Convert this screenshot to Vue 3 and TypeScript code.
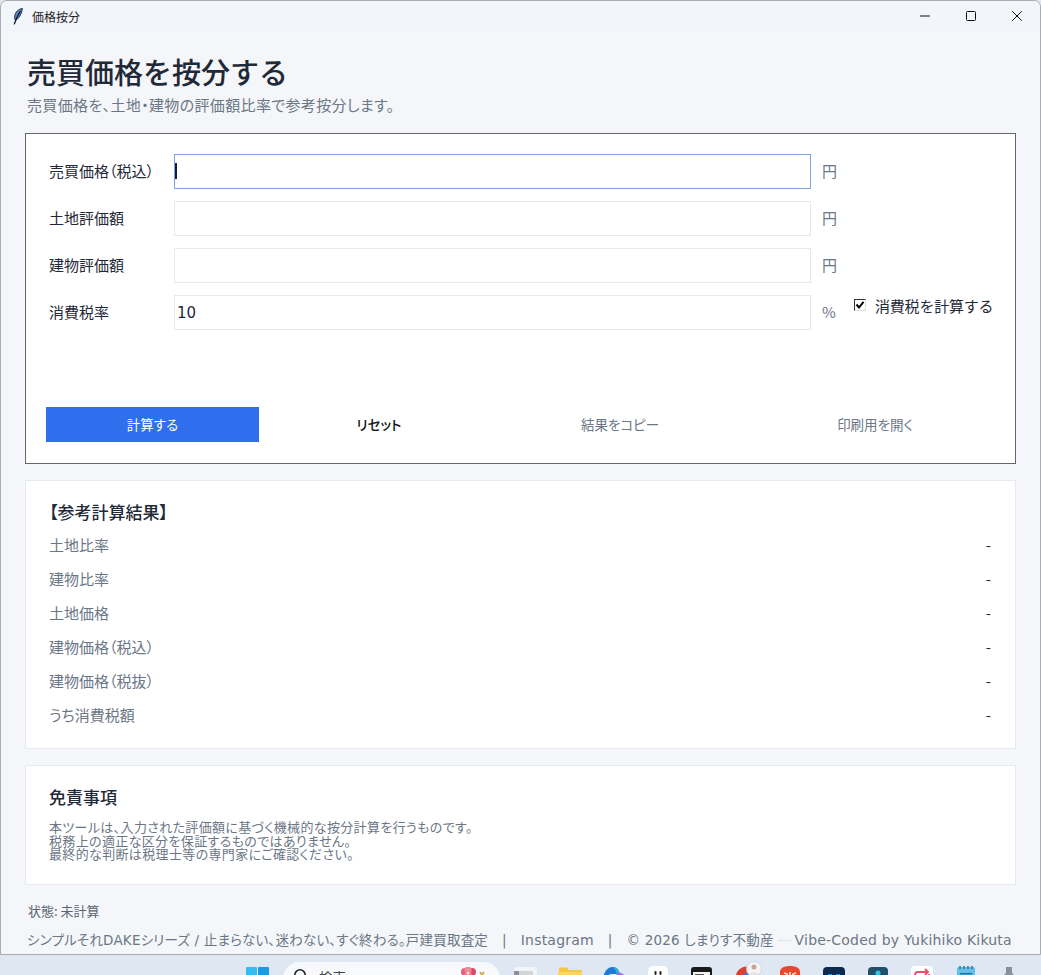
<script setup lang="ts">
import {ref} from 'vue';

interface Field {
  label: string
  unit: string
  value: string
  active?: boolean
}

const fields = ref<Field[]>([
  {label: '売買価格（税込）', unit: '円', value: '', active: true},
  {label: '土地評価額', unit: '円', value: ''},
  {label: '建物評価額', unit: '円', value: ''},
  {label: '消費税率', unit: '%', value: '10'},
]);

const calcTax = ref(true);

const actions = ['計算する', 'リセット', '結果をコピー', '印刷用を開く'];

const results = [
  '土地比率',
  '建物比率',
  '土地価格',
  '建物価格（税込）',
  '建物価格（税抜）',
  'うち消費税額',
];

const notes = [
  '本ツールは、入力された評価額に基づく機械的な按分計算を行うものです。',
  '税務上の適正な区分を保証するものではありません。',
  '最終的な判断は税理士等の専門家にご確認ください。',
];
</script>

<template>
  <div class="screen">
    <div class="window">
      <header class="titlebar">
        <svg class="feather" viewBox="0 0 10 17" width="10" height="17">
          <path d="M9.400 .5C5.600 1 2.400 3.800 1.700 8c-.3 1.700-.1 3.100.5 4 3.400-.8 6.200-5 7.200-11.500z" fill="#5f86c8" stroke="#14243f" stroke-width=".9"/>
          <path d="M7.400 3C5.400 6 3.400 10 1.200 16.400" stroke="#0c1526" stroke-width="1.300" fill="none"/>
        </svg>
        <span class="titlebar-text">価格按分</span>
        <div class="controls">
          <svg viewBox="0 0 10 10" width="10" height="10"><path d="M0 5h10" stroke="#111" stroke-width="1" fill="none"/></svg>
          <svg viewBox="0 0 10 10" width="10" height="10"><rect x=".5" y=".5" width="9" height="9" rx="1" stroke="#111" stroke-width="1" fill="none"/></svg>
          <svg viewBox="0 0 10 10" width="10" height="10"><path d="M.2 .2l9.600 9.600M9.800 .2L.2 9.800" stroke="#111" stroke-width="1" fill="none"/></svg>
        </div>
      </header>

      <main class="content">
        <h1 class="title">売買価格を按分する</h1>
        <p class="subtitle">売買価格を、土地・建物の評価額比率で参考按分します。</p>

        <section class="card form-card">
          <div class="form-rows">
            <div v-for="field in fields" :key="field.label" class="form-row">
              <label class="field-label">{{ field.label }}</label>
              <div class="input-wrap">
                <input v-model="field.value" class="field-input" :class="{active: field.active}" type="text"/>
                <span v-if="field.active" class="caret"></span>
              </div>
              <span class="unit">{{ field.unit }}</span>
              <label v-if="field.unit === '%'" class="check">
                <span class="check-box">
                  <svg v-if="calcTax" viewBox="0 0 10 10" width="10" height="10">
                    <path d="M1.500 4.500l2.500 3L8.500 1.800" stroke="#000" stroke-width="2" fill="none"/>
                  </svg>
                </span>
                消費税を計算する
              </label>
            </div>
          </div>
          <div class="actions">
            <button
              v-for="(action, i) in actions"
              :key="action"
              class="action"
              :class="{primary: i === 0, strong: i === 1}"
              type="button"
            >{{ action }}</button>
          </div>
        </section>

        <section class="card result-card">
          <h2 class="result-title">【参考計算結果】</h2>
          <div v-for="row in results" :key="row" class="result-row">
            <span>{{ row }}</span>
            <span class="result-value">-</span>
          </div>
        </section>

        <section class="card note-card">
          <h2 class="note-title">免責事項</h2>
          <p v-for="line in notes" :key="line" class="note-line">{{ line }}</p>
        </section>

        <p class="status">状態: 未計算</p>
        <footer class="footer">
          <span>シンプルそれDAKEシリーズ / 止まらない、迷わない、すぐ終わる。戸建買取査定</span>
          <span class="sep">|</span>
          <span class="latin">Instagram</span>
          <span class="sep">|</span>
          <span>© 2026 しまりす不動産</span>
          <span class="dash"></span>
          <span class="latin">Vibe-Coded by Yukihiko Kikuta</span>
        </footer>
      </main>
    </div>

    <div class="taskbar">
      <svg class="tb start" viewBox="0 0 23 23" width="23" height="23">
        <rect width="11" height="11" rx="1" fill="#35bdf2"/>
        <rect x="12" width="11" height="11" rx="1" fill="#1a9be3"/>
        <rect y="12" width="11" height="11" rx="1" fill="#1a9be3"/>
        <rect x="12" y="12" width="11" height="11" rx="1" fill="#0f7fd0"/>
      </svg>
      <div class="tb-search">
        <svg viewBox="0 0 16 16" width="16" height="16">
          <circle cx="7" cy="7" r="5.200" stroke="#222" stroke-width="1.600" fill="none"/>
        </svg>
        <span>検索</span>
        <svg class="flower" viewBox="0 0 28 14" width="28" height="14">
          <circle cx="6" cy="5" r="4" fill="#e0607a"/>
          <circle cx="13" cy="5" r="4" fill="#d94a68"/>
          <circle cx="9" cy="3" r="3.500" fill="#ee8a9c"/>
          <circle cx="9" cy="8" r="4" fill="#e77a8f"/>
          <circle cx="9" cy="6" r="1.500" fill="#fbe9c8"/>
          <path d="M21 5l2 3 2-3" stroke="#c9a63a" stroke-width="1.500" fill="none"/>
        </svg>
      </div>

      <svg class="tb files" viewBox="0 0 23 12" width="23" height="12">
        <rect width="23" height="12" rx="2" fill="#f3f4f6"/>
        <rect y="4" width="19" height="8" fill="#8d9096"/>
        <rect x="5" y="4" width="14" height="8" fill="#d3d5d8"/>
      </svg>
      <svg class="tb folder" viewBox="0 0 24 12" width="24" height="12">
        <path d="M1 12V2a1.500 1.500 0 0 1 1.500-1.500h6L11 3h12a1 1 0 0 1 1 1v8z" fill="#f6c63f"/>
        <path d="M0 5h24v7H0z" fill="#fad567"/>
      </svg>
      <svg class="tb copilot" viewBox="0 0 23 12" width="23" height="12">
        <path d="M0 12C1 4 5 0 10 0c4 0 6 3 7 7H8c-2 0-3 2-4 5z" fill="#1f7ad6"/>
        <path d="M10 0c4 0 6 3 7 7l-3 1C13 4 12 2 10 0z" fill="#2fb6c9"/>
        <circle cx="17" cy="11" r="5" fill="#a46be0"/>
        <circle cx="15" cy="11" r="2.500" fill="#e8edf6"/>
      </svg>
      <svg class="tb white" viewBox="0 0 20 12" width="20" height="12">
        <path d="M0 12V5a5 5 0 0 1 5-5h10a5 5 0 0 1 5 5v7z" fill="#fff"/>
        <rect x="6.500" y="5" width="2" height="4" rx="1" fill="#222"/>
        <rect x="11.500" y="5" width="2" height="4" rx="1" fill="#222"/>
      </svg>
      <svg class="tb book" viewBox="0 0 21 12" width="21" height="12">
        <path d="M0 12V3a3 3 0 0 1 3-3h15a3 3 0 0 1 3 3v9z" fill="#1a1a1a"/>
        <rect x="2" y="5" width="17" height="7" fill="#f4f4f4"/>
        <rect x="4" y="7" width="9" height="2" fill="#555"/>
      </svg>
      <svg class="tb chrome" viewBox="0 0 27 17" width="27" height="17">
        <circle cx="12" cy="17" r="11.500" fill="#d9402f"/>
        <circle cx="12" cy="17" r="5" fill="#3a7bdc"/>
        <circle cx="19" cy="8" r="7.500" fill="#f4f4f6" stroke="#cfd3d9" stroke-width=".8"/>
        <circle cx="19" cy="6" r="2.500" fill="#c6a792"/>
        <path d="M14 14c1-4 9-4 10 0z" fill="#e5e6ea"/>
      </svg>
      <svg class="tb brave" viewBox="0 0 20 12" width="20" height="12">
        <path d="M0 12V6C0 2 4 0 10 0s10 2 10 6v6z" fill="#e8482b"/>
        <path d="M4 7l4 1.500M16 7l-4 1.500M10 6v6" stroke="#fbe6d8" stroke-width="1.500" fill="none"/>
      </svg>
      <svg class="tb navy" viewBox="0 0 22 12" width="22" height="12">
        <path d="M0 12V4a4 4 0 0 1 4-4h14a4 4 0 0 1 4 4v8z" fill="#0c2a4d"/>
        <rect x="5" y="7" width="4" height="3" fill="#2e8fe0"/>
        <rect x="13" y="7" width="4" height="3" fill="#2e8fe0"/>
      </svg>
      <svg class="tb teal" viewBox="0 0 20 12" width="20" height="12">
        <path d="M0 12V4a4 4 0 0 1 4-4h12a4 4 0 0 1 4 4v8z" fill="#22506b"/>
        <circle cx="10" cy="6" r="2.500" fill="#35c3dc"/>
        <rect x="8" y="9" width="4" height="3" fill="#35c3dc"/>
      </svg>
      <svg class="tb pink" viewBox="0 0 22 12" width="22" height="12">
        <path d="M0 12V4a4 4 0 0 1 4-4h14a4 4 0 0 1 4 4v8z" fill="#fff"/>
        <path d="M4 12V9a3 3 0 0 1 3-3h9M18 8v4" stroke="#e8506e" stroke-width="1.800" fill="none"/>
        <path d="M14 3l3 3-3 3" stroke="#e8506e" stroke-width="1.800" fill="none"/>
      </svg>
      <svg class="tb note" viewBox="0 0 18 12" width="18" height="12">
        <rect y="1" width="18" height="11" rx="2" fill="#63bfe8"/>
        <path d="M3 0v3M7 0v3M11 0v3M15 0v3" stroke="#2a6f96" stroke-width="1.400"/>
        <rect x="3" y="7" width="12" height="1.400" fill="#1f6d9c"/>
      </svg>
      <svg class="tb pin" viewBox="0 0 12 12" width="12" height="12">
        <path d="M3 0h6v6l3 3v3H0V9l3-3z" fill="#8a8f98"/>
      </svg>
    </div>
  </div>
</template>

<style>
html, body { margin: 0; background: #dfe6f2; }
</style>

<style scoped>
.screen {
  width: 1041px;
  height: 975px;
  display: flex;
  flex-direction: column;
  overflow: hidden;
  font-family: "Noto Sans CJK JP", "Noto Sans", sans-serif;
  color: #1f2937;
}

.window {
  height: 955px;
  flex: none;
  box-sizing: border-box;
  display: flex;
  flex-direction: column;
  background: #f4f6f9;
  border: 1px solid #a9adb3;
  border-radius: 7px 7px 0 0;
}

.titlebar {
  height: 30px;
  flex: none;
  display: flex;
  align-items: center;
  padding-left: 12px;
  background: #f2f5fa;
  border-radius: 7px 7px 0 0;
}

.feather { flex: none; }

.titlebar-text {
  margin-left: 9px;
  font-size: 12px;
  color: #222;
}

.controls {
  margin-left: auto;
  display: flex;
  gap: 36px;
  padding-right: 18px;
  margin-top: -1px;
}

.content {
  flex: 1;
  padding: 0 24px;
  min-height: 0;
}

.title {
  margin: 20px 0 0 2px;
  font-size: 29px;
  line-height: 40px;
  font-weight: 500;
  color: #1f2937;
}

.subtitle {
  margin: 4px 0 0 2px;
  font-size: 15px;
  line-height: 20px;
  letter-spacing: .35px;
  font-feature-settings: "palt";
  color: #6b7686;
}

.card {
  background: #fff;
  border: 1px solid #e6e9ee;
  box-sizing: border-box;
}

.form-card {
  margin-top: 18px;
  height: 331px;
  border-color: #666;
  padding: 20px 20px 0;
  display: flex;
  flex-direction: column;
}

.form-rows {
  display: flex;
  flex-direction: column;
  gap: 12px;
}

.form-row {
  display: flex;
  align-items: center;
  height: 35px;
}

.field-label {
  width: 125px;
  padding: 0 0 2px 3px;
  flex: none;
  font-size: 15px;
  font-feature-settings: "palt";
  color: #1f2937;
}

.input-wrap {
  position: relative;
  flex: none;
  width: 637px;
  height: 35px;
}

.field-input {
  width: 100%;
  height: 100%;
  box-sizing: border-box;
  border: 1px solid #e6e9ee;
  outline: none;
  padding: 0 2px;
  font-family: "DejaVu Sans", "Noto Sans", sans-serif;
  font-size: 15px;
  color: #1f2937;
  background: #fff;
}

.field-input.active { border-color: #7ea3d9; }

.caret {
  position: absolute;
  left: 1px;
  top: 9px;
  width: 2px;
  height: 16px;
  background: #111d3c;
}

.unit {
  flex: none;
  margin-left: 11px;
  width: 32px;
  padding-bottom: 2px;
  font-size: 15px;
  color: #6b7686;
}

.check {
  display: flex;
  align-items: center;
  margin-top: -15px;
  font-size: 15px;
  letter-spacing: -.2px;
  color: #1f2937;
  white-space: nowrap;
}

.check-box {
  width: 10px;
  height: 10px;
  flex: none;
  margin-right: 9px;
  border: 1px solid;
  border-color: #333 #ddd #ddd #333;
  background: #fff;
  display: flex;
}

.actions {
  margin-top: auto;
  margin-bottom: 21px;
  display: grid;
  grid-template-columns: 213px 240px 242px 268px;
}

.action {
  height: 35px;
  border: 0;
  padding: 0 0 2px;
  background: transparent;
  font-family: inherit;
  font-feature-settings: "palt";
  font-size: 13.5px;
  color: #6b7686;
}

.action.primary {
  background: #2f6fed;
  color: #fff;
}

.action.strong {
  color: #111;
  font-weight: 500;
}

.result-card {
  margin-top: 16px;
  height: 269px;
  padding: 19px 24px 0 23px;
}

.result-title {
  margin: 0 0 4px;
  font-size: 17px;
  line-height: 24px;
  font-weight: 500;
  font-feature-settings: "palt";
  color: #1f2937;
}

.result-row {
  height: 34px;
  box-sizing: border-box;
  padding-bottom: 2px;
  display: flex;
  align-items: center;
  justify-content: space-between;
  font-size: 15px;
  font-feature-settings: "palt";
  color: #6b7686;
}

.result-value { color: #1f2937; }

.note-card {
  margin-top: 16px;
  height: 120px;
  padding: 19px 23px 0;
}

.note-title {
  margin: 0 0 11px;
  font-size: 17px;
  line-height: 24px;
  font-weight: 500;
  color: #1f2937;
}

.note-line {
  margin: 0;
  font-size: 13px;
  line-height: 13.5px;
  letter-spacing: .35px;
  font-feature-settings: "palt";
  color: #6b7686;
}

.status {
  margin: 16px 0 0 3px;
  font-size: 13px;
  line-height: 20px;
  font-feature-settings: "palt";
  color: #5a6473;
}

.footer {
  margin: 9px 0 0 2px;
  display: flex;
  align-items: center;
  font-family: "DejaVu Sans", "Noto Sans CJK JP", sans-serif;
  font-size: 13.5px;
  line-height: 20px;
  letter-spacing: .2px;
  font-feature-settings: "palt";
  color: #6b7686;
  white-space: nowrap;
}

.latin { font-size: 14px; }

.sep { margin: 0 14px; }

.dash {
  width: 13px;
  height: 1px;
  margin: 0 4px;
  background: #dfe3e8;
}

.taskbar {
  flex: 1;
  min-height: 0;
  display: flex;
  align-items: flex-start;
  padding-left: 246px;
  background: #dfe7f3;
  overflow: hidden;
}

.tb { flex: none; margin-top: 12px; }

.tb-search {
  flex: none;
  width: 217px;
  height: 32px;
  margin: 7px 0 0 14px;
  box-sizing: border-box;
  padding: 6px 0 0 10px;
  border-radius: 16px;
  background: #f7f9fc;
  display: flex;
  align-items: flex-start;
  gap: 10px;
  font-size: 13.5px;
  line-height: 18px;
  color: #444;
}

.flower { margin-left: auto; margin-right: 13px; flex: none; margin-top: -1px; }

.files { margin-left: 14px; }
.folder { margin-left: 21px; }
.copilot { margin-left: 21px; }
.white { margin-left: 22px; margin-top: 11px; }
.book { margin-left: 23px; }
.chrome { margin-left: 23px; margin-top: 6px; }
.brave { margin-left: 18px; margin-top: 11px; }
.navy { margin-left: 23px; }
.teal { margin-left: 23px; }
.pink { margin-left: 23px; margin-top: 11px; }
.note { margin-left: 24px; margin-top: 11px; }
.pin { margin-left: 28px; }
</style>
